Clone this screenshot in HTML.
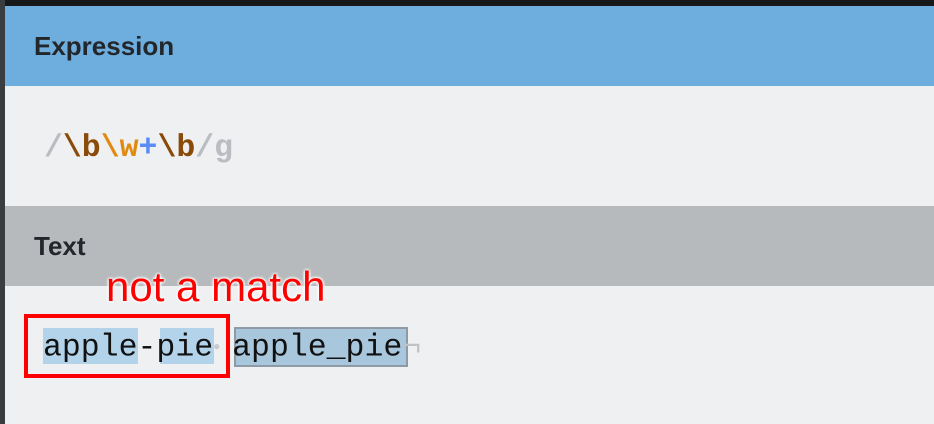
<!DOCTYPE html><html><head><style>
body{margin:0;width:934px;height:424px;background:#eff0f2;position:relative;overflow:hidden;font-family:"Liberation Sans",sans-serif}
.a{position:absolute}
.mono{font-family:"Liberation Mono",monospace;font-size:31.5px;line-height:36px;white-space:pre}
</style></head><body>
<div class="a" style="left:0;top:0;width:934px;height:6px;background:#16181a"></div>
<div class="a" style="left:0;top:0;width:5px;height:424px;background:#3a3d40"></div>
<div class="a" style="left:5px;top:6px;width:929px;height:80px;background:#6daedf"></div>
<div class="a" style="left:34px;top:31px;font-size:26px;font-weight:bold;color:#23272b">Expression</div>
<div class="a mono" style="left:44px;top:131px;font-weight:bold;color:#b9bcc0"><span>/</span><span style="color:#8a4a08">\b</span><span style="color:#e08a10">\w</span><span style="color:#5b8cf5">+</span><span style="color:#8a4a08">\b</span>/g</div>
<div class="a" style="left:5px;top:206px;width:929px;height:80px;background:#b6babd"></div>
<div class="a" style="left:34px;top:231px;font-size:26px;font-weight:bold;color:#23272b">Text</div>
<div class="a" style="left:43px;top:328px;width:95px;height:36px;background:#b2d3ea"></div>
<div class="a" style="left:160px;top:328px;width:54px;height:36px;background:#b2d3ea"></div>
<div class="a" style="left:234px;top:327px;width:170px;height:36px;background:#a8c6dc;border:2px solid #8e9ba6"></div>
<div class="a mono" style="left:43px;top:329px;color:#111">apple-pie<span style="display:inline-block;width:19px;text-align:left;color:#c8cacc;font-size:12px;vertical-align:middle">●</span>apple_pie<span style="color:#c0c2c4">¬</span></div>
<div class="a" style="left:24px;top:314px;width:198px;height:56px;border:4px solid #ff0000"></div>
<div class="a" style="left:106px;top:263px;font-size:42px;color:#ff0000;text-shadow:0 0 3px #fff,0 0 3px #fff,0 0 3px #fff">not a match</div>
</body></html>
